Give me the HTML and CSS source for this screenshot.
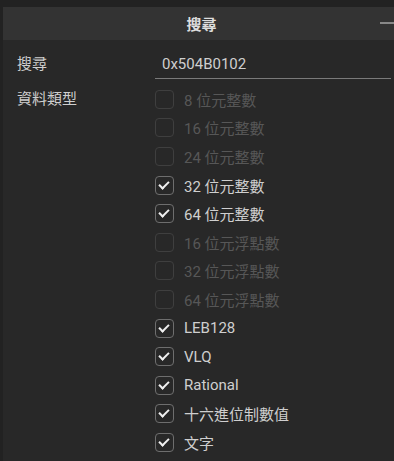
FILE: index.html
```html
<!DOCTYPE html>
<html lang="zh-Hant">
<head>
    <meta charset="UTF-8">
    <title>搜尋</title>
    <link rel="stylesheet" href="styles.css">
</head>
<body>
    <div class="panel">
        <div class="panel-header">
            <span class="panel-title">搜尋</span>
            <span class="collapse"></span>
        </div>

        <div class="panel-body">
            <div class="row">
                <div class="label">搜尋</div>
                <div class="field">
                    <div class="text-input">0x504B0102</div>
                </div>
            </div>

            <div class="row">
                <div class="label">資料類型</div>
                <div class="field checks">
                    <div class="check disabled"><span class="box"></span>8 位元整數</div>
                    <div class="check disabled"><span class="box"></span>16 位元整數</div>
                    <div class="check disabled"><span class="box"></span>24 位元整數</div>
                    <div class="check on"><span class="box"></span>32 位元整數</div>
                    <div class="check on"><span class="box"></span>64 位元整數</div>
                    <div class="check disabled"><span class="box"></span>16 位元浮點數</div>
                    <div class="check disabled"><span class="box"></span>32 位元浮點數</div>
                    <div class="check disabled"><span class="box"></span>64 位元浮點數</div>
                    <div class="check on"><span class="box"></span>LEB128</div>
                    <div class="check on"><span class="box"></span>VLQ</div>
                    <div class="check on"><span class="box"></span>Rational</div>
                    <div class="check on"><span class="box"></span>十六進位制數值</div>
                    <div class="check on"><span class="box"></span>文字</div>
                    <div class="text-input next"></div>
                </div>
            </div>
        </div>
    </div>
</body>
</html>
```

FILE: styles.css
```css
html, body {
    margin: 0;
    height: 100%;
    overflow: hidden;
}
body {
    background-color: #222222;
    font-family: Roboto, "Noto Sans CJK TC", sans-serif;
    font-size: 15px;
    color: #cfcfcf;
}
.panel {
    margin: 7px 0 0 3px;
    background-color: #282828;
    height: calc(100% - 7px);
    overflow: hidden;
}
.panel-header {
    height: 33px;
    background-color: #333333;
    display: flex;
    align-items: center;
    justify-content: center;
    position: relative;
}
.panel-title {
    font-size: 15px;
    font-weight: bold;
    color: #dddddd;
    margin-left: 6px;
}
.collapse {
    position: absolute;
    right: 0;
    top: 15px;
    width: 14px;
    height: 2px;
    background-color: #888888;
}
.panel-body {
    padding: 10px 3px 0 14px;
}
.row {
    display: flex;
}
.label {
    width: 138px;
    line-height: 28px;
}
.field {
    flex: 1;
}
.text-input {
    height: 28px;
    line-height: 28px;
    padding-left: 7px;
    border-bottom: 1px solid #7a7a7a;
    margin-bottom: 6px;
}
.checks {
    display: flex;
    flex-direction: column;
}
.check {
    display: flex;
    align-items: center;
    height: 28.6px;
}
.box {
    width: 17px;
    height: 17px;
    border: 1.5px solid #6e6e6e;
    border-radius: 4px;
    margin-right: 10px;
    position: relative;
}
.check.disabled {
    color: #575757;
}
.check.disabled .box {
    border-color: #3f3f3f;
}
.check.on .box::after {
    content: "";
    position: absolute;
    left: 5px;
    top: 2px;
    width: 4px;
    height: 8px;
    border: solid #f0f0f0;
    border-width: 0 2.5px 2.5px 0;
    transform: rotate(45deg);
}
.text-input.next {
    margin-top: 4px;
    margin-left: 2px;
}
```
